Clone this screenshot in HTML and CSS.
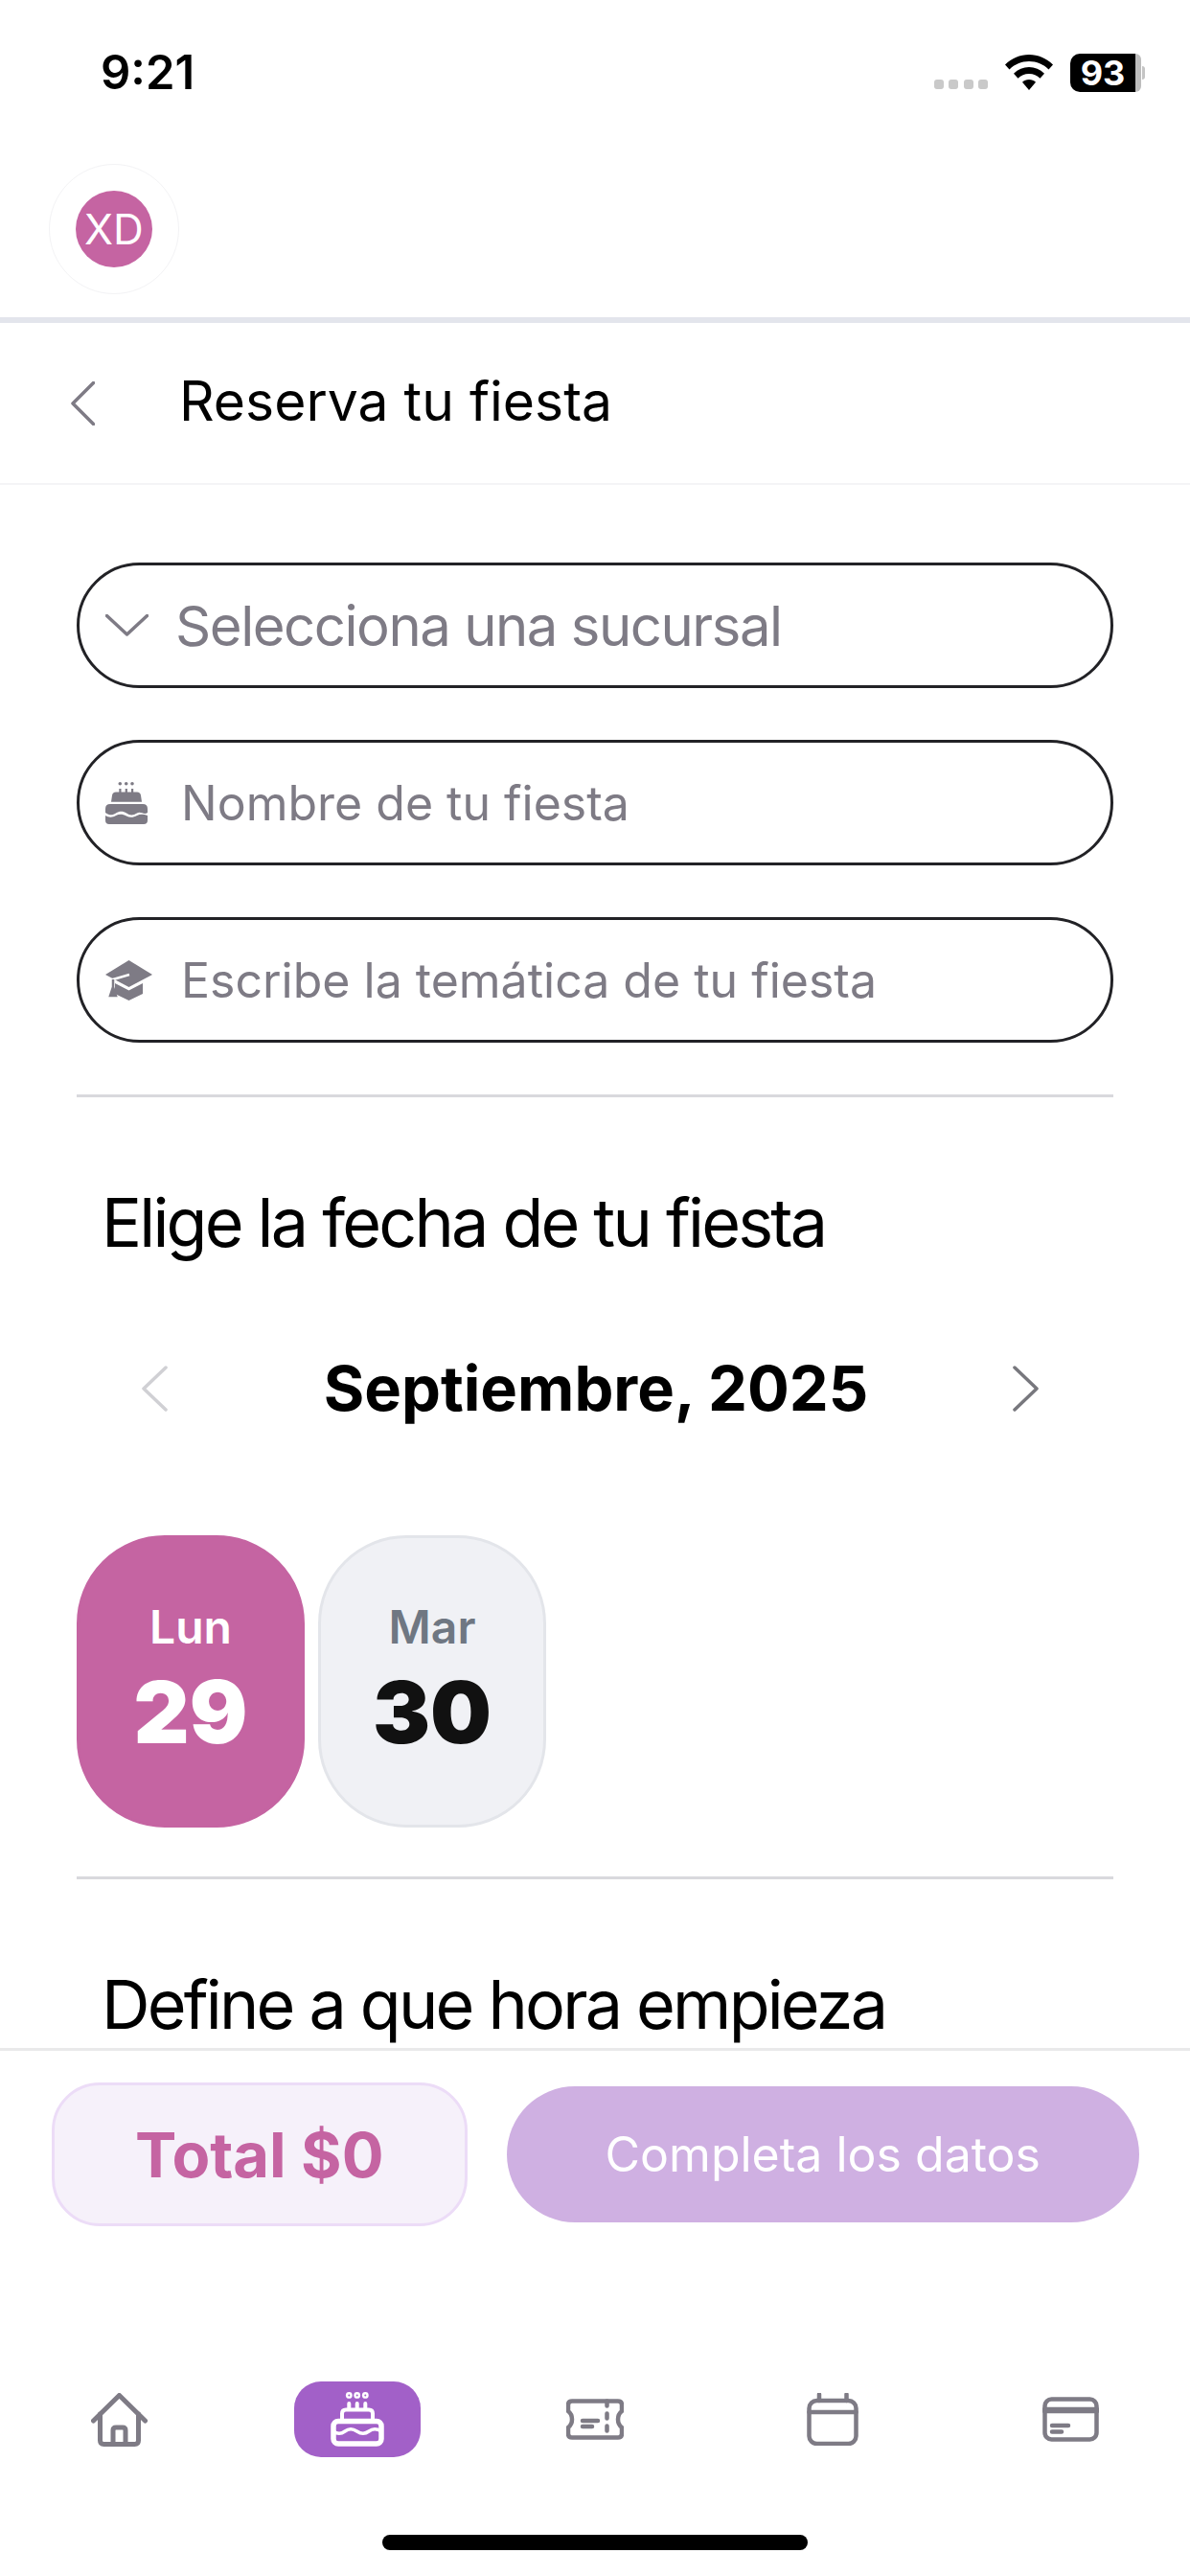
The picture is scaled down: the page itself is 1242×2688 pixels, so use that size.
FILE: index.html
```html
<!DOCTYPE html>
<html lang="es">
<head>
<meta charset="utf-8">
<title>Reserva tu fiesta</title>
<link rel="stylesheet" href="styles.css">
</head>
<body>
<div class="app">
  <div class="status">
    <span class="time">9:21</span>
    <div class="status-right">
      <div class="signal"><i></i><i></i><i></i><i></i></div>
      <svg class="wifi" width="50" height="37" viewBox="0 0 50 37"><path d="M25 0C15.500 0 7 3.700 0 10.500L4.500 15.500C10 10 17 7 25 7S40 10 45.500 15.500L50 10.500C43 3.700 34.500 0 25 0Z"/><path d="M25 13C19 13 13.500 15.300 9 19.800L13.500 24.800C16.500 21.800 20.500 20 25 20S33.500 21.800 36.500 24.800L41 19.800C36.500 15.300 31 13 25 13Z"/><path d="M25 26C22.300 26 19.800 27 18 28.800L25 37L32 28.800C30.200 27 27.700 26 25 26Z"/></svg>
      <div class="battery"><div class="battery-body"><span class="battery-text">93</span></div><div class="battery-rest"></div><div class="battery-nub"></div></div>
    </div>
  </div>

  <header class="topbar">
    <div class="avatar-ring"><div class="avatar">XD</div></div>
  </header>

  <div class="titlebar">
    <svg class="back" width="25" height="46" viewBox="0 0 25 46"><path d="M23.500 1.500L2 23L23.500 44.500"/></svg>
    <h1 class="title">Reserva tu fiesta</h1>
  </div>

  <main class="main">
    <div class="fields">
      <div class="field field-select">
        <svg class="chev-down" width="45" height="23" viewBox="0 0 45 23"><path d="M1.500 1.500L22.500 21L43.500 1.500"/></svg>
        <span class="ph ph-large">Selecciona una sucursal</span>
      </div>
      <div class="field field-cake">
        <svg class="field-icon" width="44" height="45" viewBox="0 0 44 45">
          <circle cx="15.300" cy="2.700" r="1.800"/><circle cx="21.700" cy="2.700" r="1.800"/><circle cx="28" cy="2.700" r="1.800"/>
          <rect x="14.300" y="8" width="2.200" height="5"/><rect x="20.700" y="8" width="2.200" height="5"/><rect x="27" y="8" width="2.200" height="5"/>
          <path d="M11 11.500H33Q36.500 11.500 37 15L38 21.800H6L7 15Q7.500 11.500 11 11.500Z"/>
          <path d="M5 24H39Q44 24 44 29V33C40 36 37 31 33 33.500S25.500 36 22 33.500S14.500 31 11 33.500S4 36 0 33V29Q0 24 5 24Z"/>
          <path d="M0 36C4 38.500 7.500 38 11 36S18.500 34.500 22 36.500S29.500 38 33 36S40 34.500 44 36V41Q44 45 40 45H4Q0 45 0 41Z"/>
        </svg>
        <span class="ph">Nombre de tu fiesta</span>
      </div>
      <div class="field field-cap">
        <svg class="field-icon" width="49" height="42" viewBox="0 0 49 42">
          <path d="M24.500 0L49 15L24.500 28L0 15Z"/>
          <path d="M10 24L24.500 31.500L39 24V35L24.500 42L10 35Z"/>
          <path class="cap-cord" d="M25 15L8 20V32"/>
          <path class="cap-tassel" d="M8 20V28M8 28L5 37H11Z"/>
        </svg>
        <span class="ph">Escribe la temática de tu fiesta</span>
      </div>
    </div>

    <hr class="divider">

    <h2 class="heading">Elige la fecha de tu fiesta</h2>

    <div class="month">
      <svg class="month-chev month-chev-off" width="28" height="48" viewBox="0 0 28 48"><path d="M26 2L3 24L26 46"/></svg>
      <span class="month-name">Septiembre, 2025</span>
      <svg class="month-chev" width="28" height="48" viewBox="0 0 28 48"><path d="M2 2L25 24L2 46"/></svg>
    </div>

    <div class="days">
      <div class="day day-on"><span class="day-name">Lun</span><span class="day-num">29</span></div>
      <div class="day"><span class="day-name">Mar</span><span class="day-num">30</span></div>
    </div>

    <hr class="divider divider-two">

    <h2 class="heading">Define a que hora empieza</h2>
  </main>

  <section class="checkout">
    <div class="total">Total $0</div>
    <div class="submit">Completa los datos</div>
  </section>

  <nav class="nav">
    <div class="nav-item">
      <svg class="nav-icon" width="59" height="56" viewBox="0 0 59 56"><path d="M2.500 29L29.500 2.500L56.500 29"/><path d="M9.500 22V49.500Q9.500 53.500 13.500 53.500H45.500Q49.500 53.500 49.500 49.500V22"/><path d="M23 53V39Q23 36 26 36H33Q36 36 36 39V53"/></svg>
    </div>
    <div class="nav-item nav-item-on">
      <span class="nav-pill">
        <svg class="nav-cake" width="56" height="57" viewBox="0 0 56 57">
          <circle cx="19.300" cy="3.400" r="3.400"/><circle cx="27.700" cy="3.400" r="3.400"/><circle cx="36.300" cy="3.400" r="3.400"/>
          <circle class="cake-dot" cx="19.300" cy="3.400" r="1"/><circle class="cake-dot" cx="27.700" cy="3.400" r="1"/><circle class="cake-dot" cx="36.300" cy="3.400" r="1"/>
          <path class="cake-stub" d="M19.300 12V17M27.700 12V17M36.300 12V17"/>
          <path class="cake-stub" d="M12 28V22.500Q12 18.500 16 18.500H40Q44 18.500 44 22.500V28"/>
          <rect class="cake-line" x="3" y="30.500" width="50" height="23.500" rx="5"/>
          <path class="cake-line cake-wave" d="M3 41C7 44 11 44 15 41S23 38 27.500 41S36 44 40 41S48 38 53 41"/>
        </svg>
      </span>
    </div>
    <div class="nav-item">
      <svg class="nav-icon nav-icon-thin" width="60" height="43" viewBox="0 0 60 43"><path d="M6 2.500H54Q58 2.500 58 6.500V13Q54 16 54 21.500T58 30V36.500Q58 40.500 54 40.500H6Q2 40.500 2 36.500V30Q6 27 6 21.500T2 13V6.500Q2 2.500 6 2.500Z"/><path class="ticket-dash" d="M42.500 2.500V40.500"/><path d="M17 23H33M17 29H27"/></svg>
    </div>
    <div class="nav-item">
      <svg class="nav-icon nav-icon-thin" width="54" height="55" viewBox="0 0 54 55"><rect x="2.500" y="8" width="49" height="45" rx="8"/><path d="M2.500 20H51.500"/><path d="M13 1.500V8M41.500 1.500V8"/></svg>
    </div>
    <div class="nav-item">
      <svg class="nav-icon nav-icon-thin" width="59" height="47" viewBox="0 0 59 47"><rect x="2.500" y="2.500" width="54" height="42" rx="7"/><path class="card-band" d="M2.500 14H56.500"/><path d="M10 30H27M10 36.500H20"/></svg>
    </div>
  </nav>

  <div class="home-bar"><span class="home-indicator"></span></div>
</div>
</body>
</html>
```
FILE: styles.css
```css
* { box-sizing: border-box; }
html, body { margin: 0; padding: 0; background: #fff; }
body { font-family: Inter, "Liberation Sans", sans-serif; color: #000; }

.app {
  width: 1242px;
  height: 2688px;
  display: flex;
  flex-direction: column;
  overflow: hidden;
  background: #fff;
}

/* status bar */
.status {
  height: 171px;
  flex: none;
  display: flex;
  justify-content: space-between;
  align-items: flex-start;
  padding: 50px 47px 0 105px;
}
.time { font-size: 49px; line-height: 52px; font-weight: 600; }
.status-right { display: flex; align-items: flex-start; padding-top: 6px; }
.signal { display: flex; gap: 5.500px; margin-top: 27px; margin-right: 18px; }
.signal i { width: 10px; height: 10px; border-radius: 3px; background: #c9c9c9; display: block; }
.wifi { fill: #000; margin-right: 18px; margin-top: 1px; }
.battery { display: flex; align-items: center; }
.battery-body {
  width: 68px; height: 40px;
  background: #000;
  border-radius: 10px 0 0 10px;
  display: flex; align-items: center; justify-content: center;
}
.battery-text { color: #fff; font-size: 36px; font-weight: 700; line-height: 40px; }
.battery-rest { width: 6px; height: 40px; background: #bdbdbd; border-radius: 0 8px 8px 0; }
.battery-nub { width: 3px; height: 14px; margin-left: 1px; background: #c4c4c4; border-radius: 0 4px 4px 0; }

/* top bar */
.topbar {
  height: 166px;
  flex: none;
  padding-left: 51px;
  border-bottom: 6px solid #e3e5ec;
}
.avatar-ring {
  width: 136px; height: 136px;
  border: 1px solid #f3f3f5;
  border-radius: 50%;
  display: flex; align-items: center; justify-content: center;
}
.avatar {
  width: 80px; height: 80px;
  border-radius: 50%;
  background: #c564a2;
  color: #fff;
  font-size: 44px;
  display: flex; align-items: center; justify-content: center;
}

/* title bar */
.titlebar {
  height: 169px;
  flex: none;
  display: flex;
  align-items: center;
  padding-left: 74px;
  border-bottom: 2px solid #f4f4f6;
}
.back { fill: none; stroke: #7e7b85; stroke-width: 3.500; stroke-linecap: round; stroke-linejoin: round; margin-right: 88px; }
.title { margin: 0 0 3px; font-size: 57px; font-weight: 400; line-height: 64px; }

/* main */
.main { flex: 1; min-height: 0; overflow: hidden; padding: 81px 80px 0; }
.fields { display: flex; flex-direction: column; gap: 54px; }
.field {
  height: 131px;
  border: 3px solid #222226;
  border-radius: 66px;
  display: flex;
  align-items: center;
  padding-left: 27px;
  gap: 33px;
}
.field-select { gap: 28px; }
.field-cake { gap: 35px; }
.field-cap { gap: 30px; }
.chev-down { fill: none; stroke: #7e7b85; stroke-width: 3.500; stroke-linecap: round; stroke-linejoin: round; }
.field-icon { fill: #7e7b85; flex: none; }
.cap-cord { fill: none; stroke: #fff; stroke-width: 2.500; }
.cap-tassel { stroke: #7e7b85; stroke-width: 2.500; }
.ph { color: #7e7b85; font-size: 50px; line-height: 60px; }
.ph-large { font-size: 58px; letter-spacing: -1.450px; }

.divider { margin: 54px 0 0; border: 0; height: 3px; background: #d9d9dd; }
.divider-two { margin-top: 51px; }

.heading {
  margin: 91px 0 0 26px;
  font-size: 70px;
  line-height: 80px;
  font-weight: 400;
  letter-spacing: -2.800px;
  white-space: nowrap;
}

.month {
  margin-top: 93px;
  height: 80px;
  padding: 0 77px 0 67px;
  display: flex;
  align-items: center;
  justify-content: space-between;
}
.month-name { margin-left: 12px; font-size: 65px; font-weight: 700; line-height: 80px; white-space: nowrap; }
.month-chev { fill: none; stroke: #77777d; stroke-width: 3.500; stroke-linecap: round; stroke-linejoin: round; }
.month-chev-off { stroke: #d0d0d4; }

.days { margin-top: 113px; display: flex; gap: 14px; }
.day {
  width: 238px;
  height: 305px;
  border: 3px solid #e3e5ea;
  border-radius: 92px;
  background: #f0f1f5;
  display: flex;
  flex-direction: column;
  align-items: center;
  padding-top: 65px;
}
.day-on { background: #c564a2; border-color: #c564a2; }
.day-name { font-size: 48px; font-weight: 600; line-height: 56px; color: #6f7782; }
.day-num { font-size: 90px; font-weight: 900; line-height: 88px; margin-top: 17px; color: #111; }
.day-on .day-name, .day-on .day-num { color: #fff; }

/* checkout */
.checkout {
  flex: none;
  border-top: 3px solid #e9e9ea;
  padding: 33px 53px 0 54px;
  display: flex;
  align-items: center;
  gap: 41px;
}
.total {
  width: 434px; height: 150px;
  background: #f6f1fa;
  border: 3px solid #ecdcf7;
  border-radius: 50px;
  color: #c564a2;
  font-size: 65px;
  font-weight: 700;
  display: flex; align-items: center; justify-content: center;
}
.submit {
  width: 661px; height: 142px;
  background: #cfb0e2;
  border-radius: 71px;
  color: #fff;
  font-size: 50px;
  display: flex; align-items: center; justify-content: center;
}

/* bottom nav */
.nav {
  flex: none;
  height: 322px;
  padding-top: 162px;
  display: grid;
  grid-template-columns: repeat(5, 1fr);
  align-items: start;
}
.nav-item { height: 79px; display: flex; align-items: center; justify-content: center; }
.nav-icon { fill: none; stroke: #7e7b85; stroke-width: 5; stroke-linecap: round; stroke-linejoin: round; }
.nav-icon-thin { stroke-width: 4.500; }
.ticket-dash { stroke-dasharray: 5 8; }
.card-band { stroke-width: 6.500; }
.nav-pill {
  width: 132px; height: 79px;
  border-radius: 28px;
  background: #a260c8;
  display: flex; align-items: center; justify-content: center;
}
.nav-cake { fill: #fff; }
.cake-dot { fill: #a260c8; }
.cake-stub { fill: none; stroke: #fff; stroke-width: 4; stroke-linecap: round; stroke-linejoin: round; }
.cake-line { fill: none; stroke: #fff; stroke-width: 5.500; stroke-linecap: round; stroke-linejoin: round; }
.cake-wave { stroke-width: 3.500; }

.home-bar { flex: none; height: 43px; display: flex; justify-content: center; align-items: flex-start; }
.home-indicator { width: 444px; height: 16px; border-radius: 8px; background: #000; display: block; }
```
